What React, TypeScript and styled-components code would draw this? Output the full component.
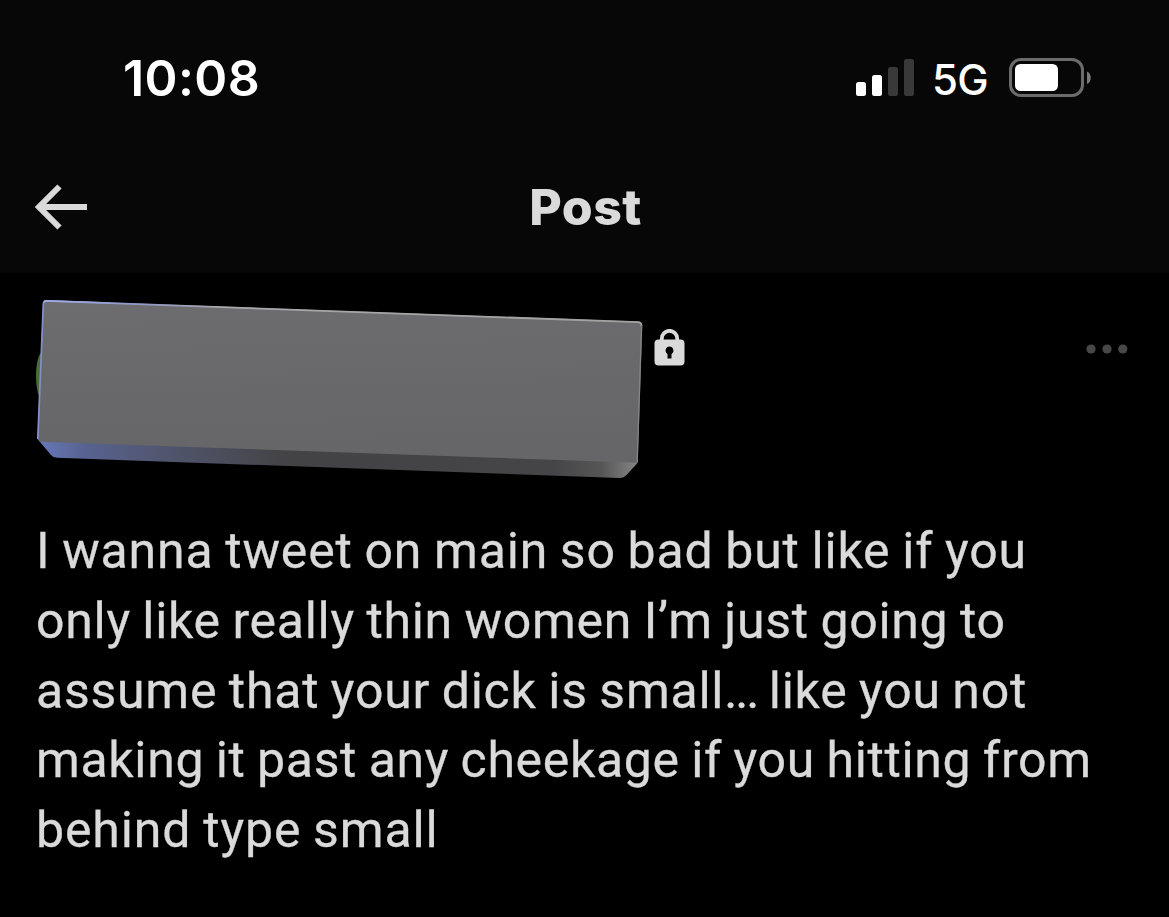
import styled, { createGlobalStyle } from "styled-components";

const GlobalStyle = createGlobalStyle`
  * {
    box-sizing: border-box;
  }
  body {
    margin: 0;
    background-color: #000000;
  }
`;

const Screen = styled.div`
  height: 917px;
  overflow: hidden;
  background-color: #000000;
  color: #dadada;
  font-family: Roboto, sans-serif;
`;

const Top = styled.div`
  height: 273px;
  background-color: #070707;
`;

const StatusBar = styled.div`
  height: 156px;
  padding: 0 77px 0 123px;
  display: flex;
  justify-content: space-between;
  align-items: center;
  color: #ffffff;
  font-family: Inter, sans-serif;
`;

const Time = styled.span`
  font-size: 50px;
  line-height: 60px;
  font-weight: 600;
  letter-spacing: 0.4px;
`;

const StatusIcons = styled.div`
  display: flex;
  align-items: center;
`;

const Network = styled.span`
  width: 57px;
  margin: 4px 20px 0 17px;
  font-size: 42px;
  line-height: 50px;
  font-weight: 500;
  letter-spacing: -0.8px;
`;

const Header = styled.header`
  height: 102px;
  padding: 0 33px 0 35px;
  display: grid;
  grid-template-columns: 1fr auto 1fr;
  align-items: center;
`;

const Back = styled.button`
  width: 52px;
  height: 46px;
  padding: 0;
  border: 0;
  background: none;
  svg {
    display: block;
  }
`;

const Title = styled.h1`
  margin: 0;
  font-family: Inter, sans-serif;
  font-size: 50px;
  line-height: 68px;
  font-weight: 800;
  letter-spacing: 0.4px;
`;

const Author = styled.div`
  height: 244px;
  padding: 25px 41px 0 35px;
  display: flex;
  align-items: flex-start;
`;

const Lock = styled.svg`
  margin: 31px 0 0 8px;
`;

const More = styled.svg`
  margin: 46px 0 0 auto;
`;

const Tweet = styled.p`
  margin: 0;
  padding-left: 36px;
  font-size: 50px;
  line-height: 69.8px;
  -webkit-text-stroke: 0.3px #dadada;
`;

const Line = styled.span<{ $spacing: number }>`
  display: block;
  white-space: nowrap;
  letter-spacing: ${(props) => props.$spacing}px;
  word-spacing: -1.5px;
`;

const Dots = styled.span`
  letter-spacing: -2.2px;
`;

const lines = [
  { text: "I wanna tweet on main so bad but like if you", spacing: 0.83 },
  { text: "only like really thin women I’m just going to", spacing: 0.7 },
  { text: "assume that your dick is small", dots: "...", rest: " like you not", spacing: 0.74 },
  { text: "making it past any cheekage if you hitting from", spacing: 0.65 },
  { text: "behind type small", spacing: 0.88 },
];

function Signal() {
  return (
    <svg width="60" height="40" viewBox="0 0 60 40">
      <rect x="1" y="24" width="10" height="14" rx="2.5" fill="#fff" />
      <rect x="17" y="17" width="10" height="21" rx="2.5" fill="#fff" />
      <rect x="33" y="9" width="10" height="29" rx="2.5" fill="#393939" />
      <rect x="49" y="1" width="10" height="37" rx="2.5" fill="#393939" />
    </svg>
  );
}

function Battery() {
  return (
    <svg width="83" height="40" viewBox="0 0 83 40">
      <rect x="1.5" y="1.5" width="72" height="36" rx="10.5" fill="none" stroke="#6b6b6b" strokeWidth="3" />
      <rect x="6" y="6" width="43" height="27" rx="5.5" fill="#fff" />
      <path d="M78 13.5c5 2 5 10.500 0 12.500z" fill="#7b7b7b" />
    </svg>
  );
}

function Brick() {
  return (
    <svg width="610" height="184" viewBox="35 298 610 184">
      <defs>
        <linearGradient id="face" x1="0" y1="0" x2="0.1" y2="1">
          <stop offset="0" stopColor="#6d6d6f" />
          <stop offset="0.5" stopColor="#69696b" />
          <stop offset="1" stopColor="#666668" />
        </linearGradient>
        <linearGradient id="base" x1="0" x2="1" y1="0" y2="0">
          <stop offset="0" stopColor="#6879bb" />
          <stop offset="0.08" stopColor="#57628f" />
          <stop offset="0.23" stopColor="#50546a" />
          <stop offset="0.42" stopColor="#434345" />
          <stop offset="0.86" stopColor="#454547" />
          <stop offset="0.94" stopColor="#565657" />
          <stop offset="1" stopColor="#858586" />
        </linearGradient>
        <linearGradient id="edge" x1="0" x2="1" y1="0" y2="0">
          <stop offset="0" stopColor="#a0aee6" />
          <stop offset="0.16" stopColor="#9099c8" />
          <stop offset="0.3" stopColor="#a8a8aa" />
          <stop offset="1" stopColor="#a2a2a2" />
        </linearGradient>
      </defs>
      <ellipse cx="42" cy="376" rx="6" ry="23" fill="#4b6b38" />
      <path d="M37.500 439L51 455Q53 457.500 57 457.700L619 478Q623 478.300 626 475.500L637.500 463L637 455L38 436z" fill="url(#base)" />
      <path d="M43 304Q43.200 300 47 300.200L638 321.500Q642.500 321.700 642.300 326L637.700 462.700L40 441.800L37.500 438z" fill="url(#face)" />
      <path d="M37.800 439L43.300 304Q43.500 300.700 47 300.800L110 303" fill="none" stroke="#8290cd" strokeWidth="1.700" />
      <path d="M44 302Q45 300.800 47 300.900L638 322.200Q641.500 322.400 641.400 326" fill="none" stroke="url(#edge)" strokeWidth="1.800" />
      <path d="M641.600 325L637.200 462" fill="none" stroke="#858587" strokeWidth="1.300" />
    </svg>
  );
}

function App() {
  return (
    <Screen>
      <GlobalStyle />
      <Top>
        <StatusBar>
          <Time>10:08</Time>
          <StatusIcons>
            <Signal />
            <Network>5G</Network>
            <Battery />
          </StatusIcons>
        </StatusBar>
        <Header>
          <Back aria-label="Back">
            <svg width="52" height="46" viewBox="0 0 52 46" fill="none" stroke="#dadada" strokeWidth="6">
              <path d="M24.500 2.500L4 23L24.500 43.500M4 23H52" />
            </svg>
          </Back>
          <Title>Post</Title>
        </Header>
      </Top>
      <Author>
        <Brick />
        <Lock width="33" height="38" viewBox="0 0 33 38">
          <path d="M8.800 13V9.500a7.700 7.700 0 0 1 15.400 0V13" fill="none" stroke="#dadada" strokeWidth="3.800" />
          <path fill="#dadada" fillRule="evenodd" d="M5.500 10.500h22a4 4 0 0 1 4 4v18a4 4 0 0 1-4 4h-22a4 4 0 0 1-4-4v-18a4 4 0 0 1 4-4zM16.500 17.500a4 4 0 0 0-2 7.400V29.500h4v-4.600A4 4 0 0 0 16.500 17.500z" />
        </Lock>
        <More width="42" height="10" viewBox="0 0 42 10" fill="#48484a">
          <circle cx="5" cy="5" r="4.600" />
          <circle cx="21" cy="5" r="4.600" />
          <circle cx="36.800" cy="5" r="4.600" />
        </More>
      </Author>
      <Tweet>
        {lines.map((line) => (
          <Line key={line.text} $spacing={line.spacing}>
            {line.text}
            {line.dots && <Dots>{line.dots}</Dots>}
            {line.rest}
          </Line>
        ))}
      </Tweet>
    </Screen>
  );
}

export default App;
